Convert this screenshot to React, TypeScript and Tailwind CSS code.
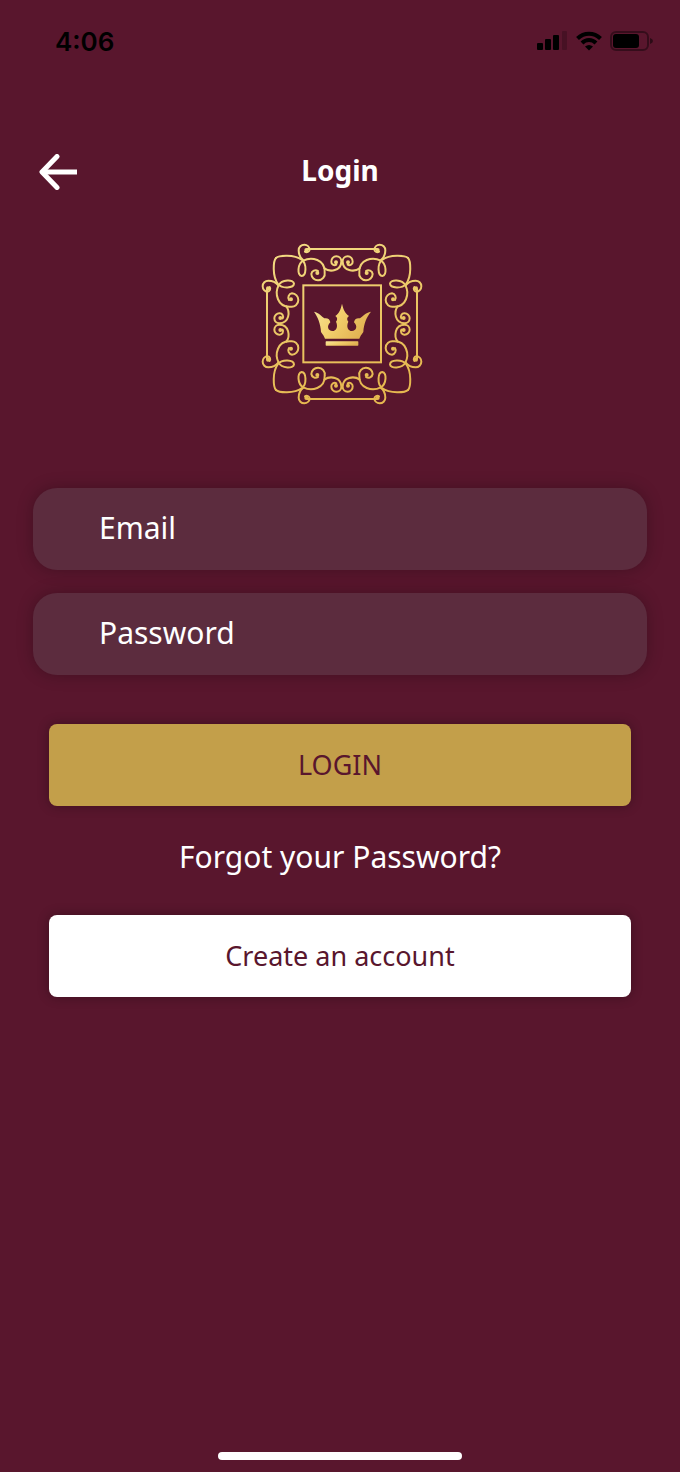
import React from "react"

const GOLD_CURVES = [
  "M-198 -198 C-190 -206 -144 -210 -120 -192 C-105 -180 -107 -145 -121 -144 C-135 -145 -134 -181 -116 -190 C-92 -203 -50 -194 -52 -155 A20 20 0 0 1 -72 -131 A20 20 0 0 1 -92 -150 A13 13 0 0 1 -72 -159",
  "M-53 -167 C-37 -155 -2 -158 -2 -188 A15 15 0 0 0 -17 -203 A15 15 0 0 0 -32 -187 A10 10 0 0 0 -17 -178",
  "M-116 -191 C-124 -197 -130 -208 -130 -221 A17 17 0 0 1 -113 -238 A16 16 0 0 1 -97 -223 A9 9 0 0 1 -111 -217",
  "M-104 -225 H0",
]

function Octant() {
  return (
    <g id="octant">
      {GOLD_CURVES.map((d) => (
        <path key={d} d={d} />
      ))}
      <circle cx="-74" cy="-153" r="3" fill="white" />
      <circle cx="-18" cy="-185" r="3" fill="white" />
      <circle cx="-107" cy="-222" r="3" fill="white" />
    </g>
  )
}

function Logo() {
  return (
    <svg viewBox="-243 -243 486 486" className="h-[162px] w-[162px]" role="img" aria-label="Crown">
      <defs>
        <linearGradient id="gold" x1="0" y1="0" x2="0.3" y2="1">
          <stop offset="0" stopColor="#f5dd88" />
          <stop offset="0.5" stopColor="#ecc968" />
          <stop offset="1" stopColor="#e6b850" />
        </linearGradient>
        <linearGradient id="crown" x1="0" y1="0" x2="1" y2="0.4">
          <stop offset="0" stopColor="#f8e59a" />
          <stop offset="0.5" stopColor="#f2cf6c" />
          <stop offset="1" stopColor="#e2b353" />
        </linearGradient>
        <mask id="ornament" maskUnits="userSpaceOnUse" x="-243" y="-243" width="486" height="486">
          <g fill="none" stroke="white" strokeWidth="6" strokeLinecap="round">
            <Octant />
            <use href="#octant" transform="matrix(0 1 1 0 0 0)" />
            <use href="#octant" transform="scale(-1 1)" />
            <use href="#octant" transform="matrix(0 1 -1 0 0 0)" />
            <use href="#octant" transform="scale(1 -1)" />
            <use href="#octant" transform="matrix(0 -1 1 0 0 0)" />
            <use href="#octant" transform="scale(-1 -1)" />
            <use href="#octant" transform="matrix(0 -1 -1 0 0 0)" />
            <rect x="-116" y="-116" width="233" height="231" />
          </g>
        </mask>
      </defs>
      <rect x="-243" y="-243" width="486" height="486" fill="url(#gold)" mask="url(#ornament)" />
      <g fill="url(#crown)">
        <path d="M0 -61 C4 -44 9 -32 21 -24 C14 -19 14 -13 19 -7 C12 8 18 21 30 21 C43 21 48 6 36 -5 C37 -14 44 -19 54 -17 C62 -23 70 -34 87 -37 C74 -22 65 0 64 24 C58 32 54 38 52 44 H-51 C-53 38 -57 32 -63 24 C-64 0 -73 -22 -84 -37 C-69 -34 -61 -23 -53 -17 C-43 -19 -36 -14 -35 -5 C-47 6 -42 21 -29 21 C-17 21 -11 8 -18 -7 C-13 -13 -13 -19 -20 -24 C-8 -32 -4 -44 0 -61 Z" />
        <rect x="-49" y="52" width="98" height="13" rx="2" />
      </g>
    </svg>
  )
}

function StatusBar() {
  return (
    <div className="flex h-[82px] items-center justify-between pr-[26px] pl-[55px] text-black">
      <span className="font-['Inter'] text-[26px] font-semibold">4:06</span>
      <div className="flex items-center gap-2">
        <svg viewBox="0 0 31 20" className="h-5 w-[31px]" fill="currentColor" aria-hidden="true">
          <rect x="0" y="12" width="6" height="7" rx="1" />
          <rect x="8" y="8" width="6" height="11" rx="1" />
          <rect x="16" y="4" width="6" height="15" rx="1" />
          <rect x="25" y="0" width="5" height="19" rx="1" opacity="0.2" />
        </svg>
        <svg viewBox="0 0 26 20" className="h-5 w-[26px]" fill="none" stroke="currentColor" strokeWidth="4" aria-hidden="true">
          <path d="M1.5 7.5 C8 1 18 1 24.5 7.5" />
          <path d="M6 12 C10 8 16 8 20 12" />
          <path d="M9 15.5 Q13 12.5 17 15.5 L13 19.5 Z" fill="currentColor" stroke="none" />
        </svg>
        <svg viewBox="0 0 44 20" className="h-5 w-11" aria-hidden="true">
          <rect x="1" y="1" width="37" height="18" rx="5" fill="none" stroke="currentColor" strokeWidth="2" opacity="0.4" />
          <rect x="3" y="3" width="26" height="14" rx="3" fill="currentColor" />
          <path d="M40 7 Q43 8 43 10 Q43 12 40 13 Z" fill="currentColor" opacity="0.5" />
        </svg>
      </div>
    </div>
  )
}

interface FieldProps {
  label: string
  type: string
}

function Field({ label, type }: FieldProps) {
  return (
    <input
      type={type}
      placeholder={label}
      aria-label={label}
      className="h-[82px] w-full rounded-[24px] bg-[#5c2c3e] px-[66px] pb-1 text-[30px] text-white shadow-[0_0_16px_rgba(0,0,0,0.25)] outline-none placeholder:text-white placeholder:opacity-100"
    />
  )
}

export default function App() {
  return (
    <div className="flex min-h-screen flex-col bg-[#59162d] font-['Noto_Sans',sans-serif] text-white">
      <StatusBar />

      <header className="mt-[58px] grid grid-cols-[1fr_auto_1fr] items-center px-[38px]">
        <button type="button" aria-label="Back" className="justify-self-start">
          <svg viewBox="0 0 40 36" className="h-9 w-10" fill="none" stroke="currentColor" strokeWidth="5" aria-hidden="true">
            <path d="M19 2.5 L4 18 L19 33.5" strokeLinecap="round" strokeLinejoin="round" />
            <path d="M5 18 H39" />
          </svg>
        </button>
        <h1 className="pb-1 text-[28px] leading-[60px] font-bold">Login</h1>
      </header>

      <main className="flex flex-col px-[33px]">
        <div className="mt-[39px] flex justify-center pl-1">
          <Logo />
        </div>

        <form className="mt-[83px] flex flex-col gap-[23px]" onSubmit={(e) => e.preventDefault()}>
          <Field label="Email" type="email" />
          <Field label="Password" type="password" />
          <div className="mt-[26px] flex flex-col px-4">
            <button
              type="submit"
              className="h-[82px] rounded-lg bg-[#c39f4a] text-[27px] text-[#59162d] shadow-[0_0_12px_rgba(0,0,0,0.3)]"
            >
              LOGIN
            </button>
            <a href="#forgot" className="mt-[27px] mb-[34px] self-center text-[30px] leading-[48px]">
              Forgot your Password?
            </a>
            <button
              type="button"
              className="h-[82px] rounded-lg bg-white text-[27px] text-[#59162d] shadow-[0_0_12px_rgba(0,0,0,0.3)]"
            >
              Create an account
            </button>
          </div>
        </form>
      </main>

      <div className="mt-auto mb-3 h-2 w-[244px] self-center rounded-full bg-white" />
    </div>
  )
}
